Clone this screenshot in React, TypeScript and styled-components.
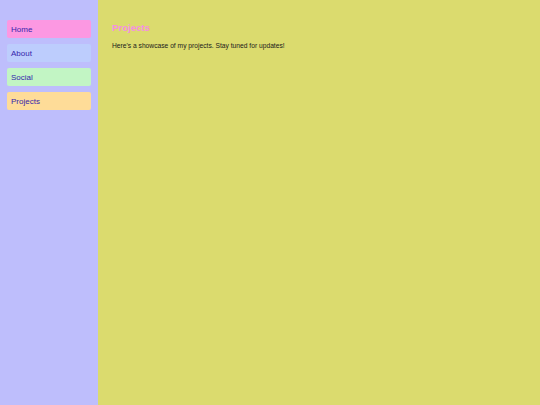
import React from "react";
import styled, { createGlobalStyle } from "styled-components";

const GlobalStyle = createGlobalStyle`
  html, body, #root { margin: 0; padding: 0; height: 100%; }
  body { font-family: "Liberation Sans", Arial, sans-serif; }
`;

const Layout = styled.div`
  display: flex;
  height: 405px;
`;

const Sidebar = styled.nav`
  width: 98px;
  box-sizing: border-box;
  padding: 20px 7px;
  background: #bebefc;
  display: flex;
  flex-direction: column;
  gap: 6px;
`;

const NavButton = styled.a<{ $bg: string }>`
  display: flex;
  align-items: center;
  height: 18px;
  padding: 0 4px;
  border-radius: 2px;
  background: ${(p) => p.$bg};
  color: #3525ac;
  font-size: 8px;
  text-decoration: none;
  cursor: pointer;
`;

const Main = styled.main`
  flex: 1;
  background: #dbdb6e;
  padding: 22px 14px;
`;

const Title = styled.h1`
  margin: 0 0 9px;
  font-size: 9.6px;
  font-weight: bold;
  color: #f58fe2;
`;

const Text = styled.p`
  margin: 0;
  font-size: 6.7px;
  color: #1a1a1a;
`;

const links = [
  { label: "Home", bg: "#fc98e2" },
  { label: "About", bg: "#bdcdfd" },
  { label: "Social", bg: "#c2f5c4" },
  { label: "Projects", bg: "#fedc98" },
];

export default function App() {
  return (
    <>
      <GlobalStyle />
      <Layout>
        <Sidebar>
          {links.map((l) => (
            <NavButton key={l.label} $bg={l.bg}>
              {l.label}
            </NavButton>
          ))}
        </Sidebar>
        <Main>
          <Title>Projects</Title>
          <Text>Here's a showcase of my projects. Stay tuned for updates!</Text>
        </Main>
      </Layout>
    </>
  );
}
